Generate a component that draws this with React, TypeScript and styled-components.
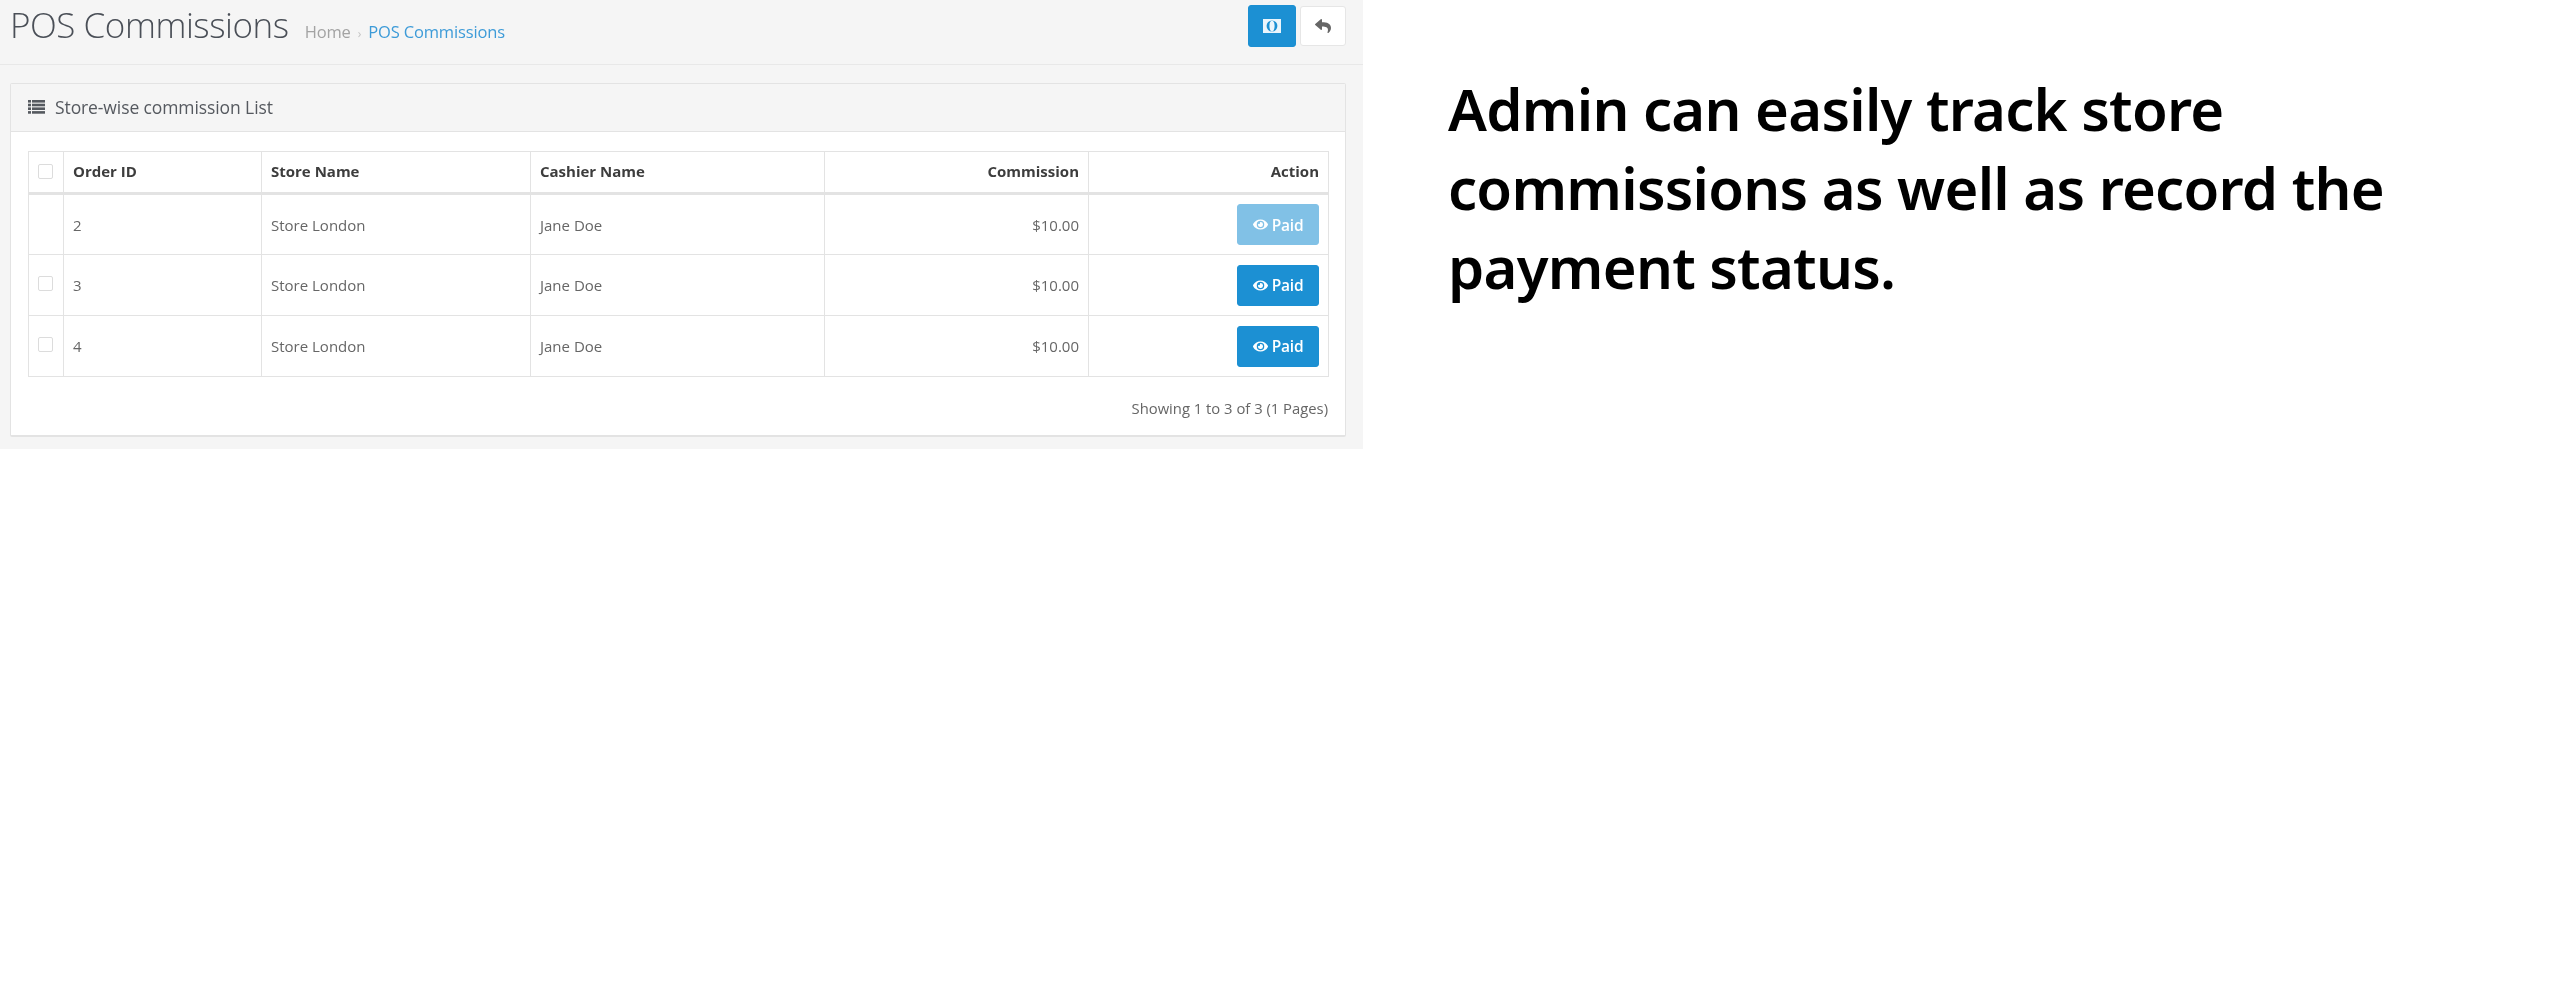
import React from "react";
import styled, { createGlobalStyle } from "styled-components";
import { FaEye, FaReply } from "react-icons/fa";

const Global = createGlobalStyle`
  html, body { margin: 0; padding: 0; background: #fff; }
  body { font-family: "Open Sans", "Noto Sans", sans-serif; }
`;

const Shot = styled.div`
  display: flex;
  align-items: flex-start;
  width: 2560px;
  height: 1000px;
  overflow: hidden;
`;

const Page = styled.main`
  flex: none;
  width: 1363px;
  height: 449px;
  box-sizing: border-box;
  background: #f5f5f5;
  filter: blur(0.5px);
`;

const PageHeader = styled.header`
  display: flex;
  align-items: flex-start;
  justify-content: space-between;
  height: 65px;
  box-sizing: border-box;
  padding: 5px 17px 0 10px;
  border-bottom: 1px solid #e8e8e8;
`;

const TitleGroup = styled.div`
  display: flex;
  align-items: baseline;
  gap: 16px;
`;

const Title = styled.h1`
  margin: 0;
  font-size: 35px;
  line-height: 40px;
  letter-spacing: -0.45px;
  font-weight: 300;
  color: #4a4f57;
`;

const Crumbs = styled.nav`
  display: flex;
  align-items: baseline;
  gap: 7px;
  font-size: 16.5px;
  letter-spacing: -0.15px;
  color: #a3a3a3;
`;

const CrumbSep = styled.span`
  font-size: 12px;
  color: #c4c4c4;
`;

const CrumbLink = styled.a`
  color: #3d9bd8;
`;

const Actions = styled.div`
  display: flex;
  align-items: center;
  gap: 4px;
  height: 42px;
`;

const IconButton = styled.button<{ $primary?: boolean }>`
  display: flex;
  align-items: center;
  justify-content: center;
  padding: 0;
  width: ${(p) => (p.$primary ? "48px" : "46px")};
  height: ${(p) => (p.$primary ? "42px" : "40px")};
  border-radius: 3px;
  border: 1px solid ${(p) => (p.$primary ? "#1b8fd2" : "#e6e6e6")};
  background: ${(p) => (p.$primary ? "#1c90d3" : "#fff")};
  color: ${(p) => (p.$primary ? "#fff" : "#666")};
  font-size: 16px;
`;

const Panel = styled.section`
  margin: 18px 17px 0 10px;
  height: 354px;
  box-sizing: border-box;
  background: #fff;
  border: 1px solid #e3e3e3;
  border-bottom-width: 2px;
  border-radius: 2px;
`;

const PanelHeading = styled.div`
  display: flex;
  align-items: center;
  gap: 10px;
  height: 48px;
  box-sizing: border-box;
  padding: 0 0 1px 17px;
  background: #f5f5f5;
  border-bottom: 1px solid #e3e3e3;
  font-size: 17.5px;
  letter-spacing: -0.1px;
  color: #55595f;
`;

const PanelBody = styled.div`
  padding: 19px 18px 0 17px;
`;

const Table = styled.table`
  width: 1300px;
  table-layout: fixed;
  border-collapse: collapse;
  font-size: 15px;
  color: #666;
`;

const Th = styled.th<{ $right?: boolean }>`
  height: 42px;
  box-sizing: border-box;
  padding: 0 9px 2px;
  border: 1px solid #e3e3e3;
  border-bottom-width: 3px;
  text-align: ${(p) => (p.$right ? "right" : "left")};
  font-weight: 700;
  color: #3d3d3d;
`;

const Td = styled.td<{ $right?: boolean }>`
  height: 61px;
  box-sizing: border-box;
  padding: 0 9px;
  border: 1px solid #e3e3e3;
  text-align: ${(p) => (p.$right ? "right" : "left")};
`;

const CheckCell = styled.td`
  height: 61px;
  box-sizing: border-box;
  padding: 21px 0 0 9px;
  border: 1px solid #e3e3e3;
  vertical-align: top;
`;

const CheckHead = styled.th`
  height: 42px;
  box-sizing: border-box;
  padding: 0 0 2px 9px;
  border: 1px solid #e3e3e3;
  border-bottom-width: 3px;
  text-align: left;
`;

const Check = styled.span`
  display: block;
  width: 15px;
  height: 15px;
  box-sizing: border-box;
  border: 1px solid #dcdcdc;
  border-radius: 2px;
  background: #fff;
`;

const PaidButton = styled.button<{ $disabled?: boolean }>`
  display: inline-flex;
  align-items: center;
  justify-content: center;
  gap: 4px;
  width: 82px;
  height: 41px;
  padding: 0;
  border: 1px solid #1b8fd2;
  border-radius: 3px;
  background: #1c90d3;
  color: #fff;
  font-family: inherit;
  font-size: 15.5px;
  font-weight: 600;
  letter-spacing: -0.2px;
  opacity: ${(p) => (p.$disabled ? 0.55 : 1)};
  vertical-align: middle;
`;

const Pager = styled.div`
  margin: 21px -1px 0 0;
  text-align: right;
  font-size: 14.8px;
  color: #666;
`;

const Caption = styled.p`
  flex: none;
  width: 1000px;
  margin: 69px 0 0 85px;
  font-family: "Noto Sans", "Open Sans", sans-serif;
  font-size: 58px;
  line-height: 79px;
  letter-spacing: -0.75px;
  font-weight: 600;
  color: #000;
`;

const ListIcon = () => (
  <svg width="17" height="14" viewBox="0 0 17 14" fill="currentColor" aria-hidden="true">
    <rect x="0" y="0" width="3" height="2.6" />
    <rect x="4" y="0" width="13" height="2.6" />
    <rect x="0" y="3.7" width="3" height="2.6" />
    <rect x="4" y="3.7" width="13" height="2.6" />
    <rect x="0" y="7.4" width="3" height="2.6" />
    <rect x="4" y="7.4" width="13" height="2.6" />
    <rect x="0" y="11.1" width="3" height="2.6" />
    <rect x="4" y="11.1" width="13" height="2.6" />
  </svg>
);

const MoneyIcon = () => (
  <svg width="18" height="14" viewBox="0 0 18 14" aria-hidden="true">
    <rect x="0" y="0" width="18" height="14" fill="#eaf5fc" />
    <ellipse cx="9" cy="7" rx="5.4" ry="5.6" fill="#1c90d3" />
    <ellipse cx="9" cy="7" rx="2.6" ry="5.6" fill="#eaf5fc" />
  </svg>
);

const rows = [
  { id: 2, disabled: true, check: false },
  { id: 3, disabled: false, check: true },
  { id: 4, disabled: false, check: true },
];

export default function App() {
  return (
    <>
      <Global />
      <Shot>
        <Page>
          <PageHeader>
            <TitleGroup>
              <Title>POS Commissions</Title>
              <Crumbs>
                <span>Home</span>
                <CrumbSep>›</CrumbSep>
                <CrumbLink>POS Commissions</CrumbLink>
              </Crumbs>
            </TitleGroup>
            <Actions>
              <IconButton $primary><MoneyIcon /></IconButton>
              <IconButton><FaReply /></IconButton>
            </Actions>
          </PageHeader>
          <Panel>
            <PanelHeading><ListIcon />Store-wise commission List</PanelHeading>
            <PanelBody>
              <Table>
                <colgroup>
                  <col width="35" />
                  <col width="198" />
                  <col width="269" />
                  <col width="294" />
                  <col width="264" />
                  <col width="240" />
                </colgroup>
                <thead>
                  <tr>
                    <CheckHead><Check /></CheckHead>
                    <Th>Order ID</Th>
                    <Th>Store Name</Th>
                    <Th>Cashier Name</Th>
                    <Th $right>Commission</Th>
                    <Th $right>Action</Th>
                  </tr>
                </thead>
                <tbody>
                  {rows.map((r) => (
                    <tr key={r.id}>
                      <CheckCell>{r.check && <Check />}</CheckCell>
                      <Td>{r.id}</Td>
                      <Td>Store London</Td>
                      <Td>Jane Doe</Td>
                      <Td $right>$10.00</Td>
                      <Td $right>
                        <PaidButton $disabled={r.disabled}><FaEye size={15} />Paid</PaidButton>
                      </Td>
                    </tr>
                  ))}
                </tbody>
              </Table>
              <Pager>Showing 1 to 3 of 3 (1 Pages)</Pager>
            </PanelBody>
          </Panel>
        </Page>
        <Caption>Admin can easily track store commissions as well as record the payment status.</Caption>
      </Shot>
    </>
  );
}
